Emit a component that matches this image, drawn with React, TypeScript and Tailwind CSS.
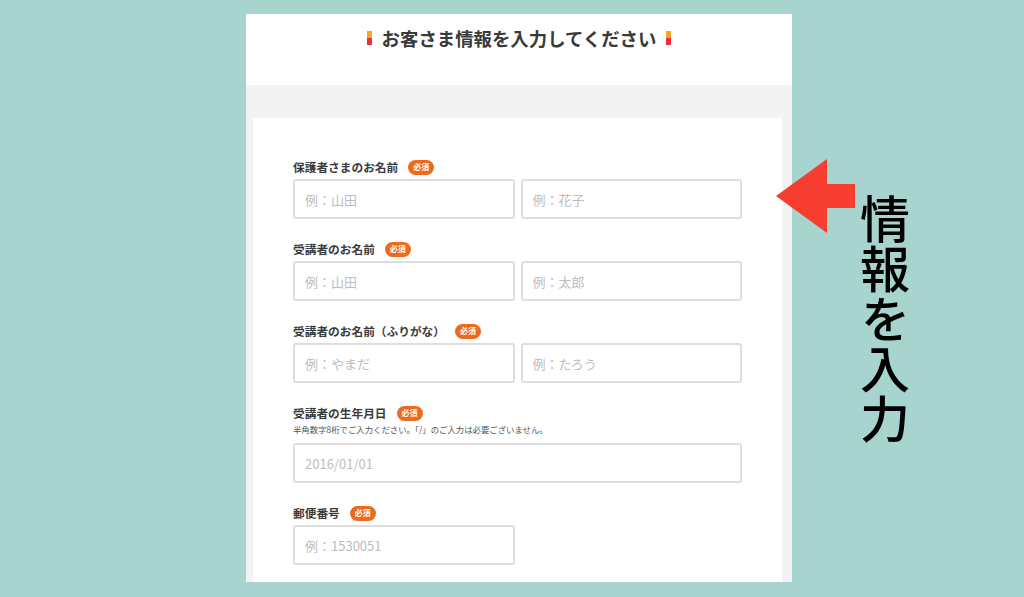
const font = { fontFamily: '"Noto Sans CJK JP", "Noto Sans", sans-serif' };

function Badge() {
  return (
    <span className="inline-flex h-[15px] w-[26px] items-center justify-center rounded-full bg-[#eb6a1e] text-[8px] font-bold leading-none text-white">
      必須
    </span>
  );
}

function Label({ text }: { text: string }) {
  return (
    <div className="flex h-[14px] items-center gap-[10px]">
      <span className="text-[11.7px] font-bold leading-none text-[#3b3b3b]">{text}</span>
      <Badge />
    </div>
  );
}

function Field({ placeholder }: { placeholder: string }) {
  return (
    <input
      readOnly
      placeholder={placeholder}
      className="h-[40px] w-full rounded-[3px] border-2 border-[#dedede] bg-white px-[10px] text-[13px] text-[#333] outline-none placeholder:text-[#bdbdbd]"
      style={font}
    />
  );
}

function TitleBar() {
  return (
    <span className="flex h-[14px] w-[5px] flex-col">
      <span className="h-1/2 bg-[#f8a41c]" />
      <span className="h-1/2 bg-[#e8313f]" />
    </span>
  );
}

export default function App() {
  return (
    <div className="flex h-[597px] w-[1024px] items-start overflow-hidden bg-[#a7d4ce]" style={font}>
      <div className="ml-[246px] mt-[14px] flex h-[568px] w-[546px] shrink-0 flex-col bg-[#f3f3f3]">
        <div className="flex h-[71px] justify-center bg-white pt-[11px]">
          <div className="flex h-[26px] items-center gap-[10px]">
            <TitleBar />
            <span className="text-[18.4px] font-bold leading-none text-[#3a3a3a]">お客さま情報を入力してください</span>
            <TitleBar />
          </div>
        </div>
        <div className="flex flex-1 pl-[7px] pr-[10px] pt-[33px]">
          <div className="flex flex-1 flex-col gap-[23px] bg-white px-[40px] pt-[42px]">
            <div className="flex flex-col gap-[5px]">
              <Label text="保護者さまのお名前" />
              <div className="grid grid-cols-2 gap-[6px]">
                <Field placeholder="例：山田" />
                <Field placeholder="例：花子" />
              </div>
            </div>
            <div className="flex flex-col gap-[5px]">
              <Label text="受講者のお名前" />
              <div className="grid grid-cols-2 gap-[6px]">
                <Field placeholder="例：山田" />
                <Field placeholder="例：太郎" />
              </div>
            </div>
            <div className="flex flex-col gap-[5px]">
              <Label text="受講者のお名前（ふりがな）" />
              <div className="grid grid-cols-2 gap-[6px]">
                <Field placeholder="例：やまだ" />
                <Field placeholder="例：たろう" />
              </div>
            </div>
            <div className="flex flex-col">
              <Label text="受講者の生年月日" />
              <p className="mt-[3px] h-[12px] text-[8.4px] leading-[12px] text-[#555]">
                半角数字8桁でご入力ください。「/」のご入力は必要ございません。
              </p>
              <div className="mt-[8px]">
                <Field placeholder="2016/01/01" />
              </div>
            </div>
            <div className="flex flex-col gap-[5px]">
              <Label text="郵便番号" />
              <div className="grid grid-cols-2 gap-[6px]">
                <Field placeholder="例：1530051" />
              </div>
            </div>
          </div>
        </div>
      </div>
      <svg className="relative -ml-[16px] mt-[159px] shrink-0" width="79" height="74" viewBox="0 0 79 74">
        <path d="M0 37 L51 0 L51 25 L79 25 L79 49 L51 49 L51 74 Z" fill="#f73c30" />
      </svg>
      <div className="ml-[5px] mt-[194px] text-[50px] font-medium leading-[50px] text-black [writing-mode:vertical-rl]">
        情報を入力
      </div>
    </div>
  );
}
